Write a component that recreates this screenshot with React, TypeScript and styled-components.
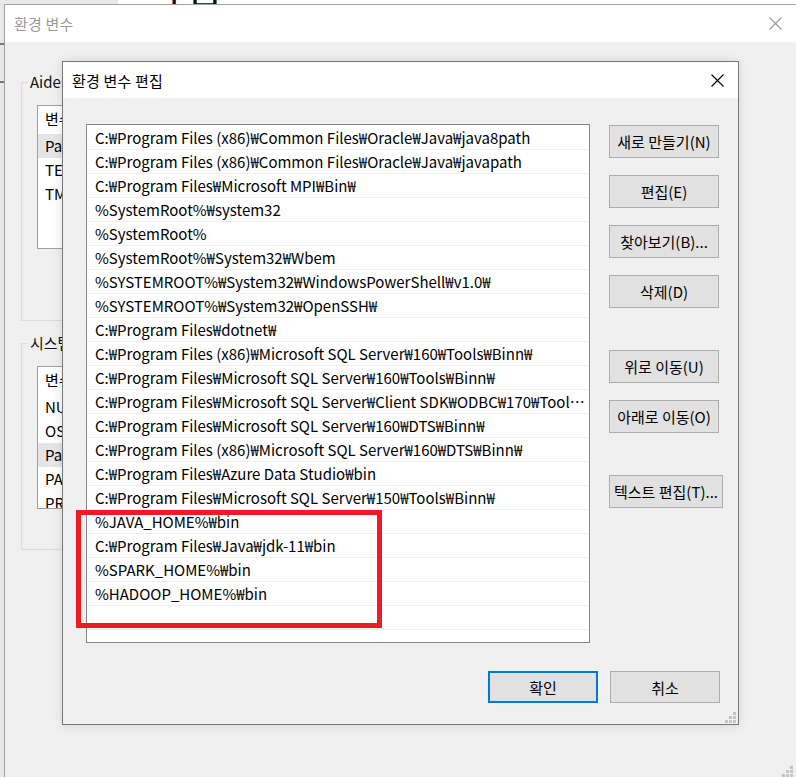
import React from "react";
import styled, { createGlobalStyle } from "styled-components";

const Global = createGlobalStyle`
  html, body { margin: 0; padding: 0; }
  body {
    width: 796px;
    height: 777px;
    overflow: hidden;
    background: #f0f0f0;
    font-family: "Noto Sans CJK KR", "Noto Sans", sans-serif;
    font-size: 15px;
    color: #000;
  }
  * { box-sizing: border-box; }
`;

const Screen = styled.div`
  width: 796px;
  height: 777px;
  overflow: hidden;
  position: relative;
  display: flex;
  flex-direction: column;
`;

const TopStrip = styled.div`
  height: 4px;
  display: flex;
  overflow: hidden;
  flex-shrink: 0;
`;

const BackPanel = styled.div`
  width: 118px;
  background: #e8e8e8;
`;

const BackDoc = styled.div`
  flex: 1;
  background: #fff;
  overflow: hidden;
`;

const BackHeading = styled.div`
  font-size: 40px;
  line-height: 40px;
  font-weight: 400;
  margin-top: -34px;
  margin-left: 28px;
  letter-spacing: 2px;
  color: #111;
`;

const Desk = styled.div`
  flex: 1;
  display: flex;
  min-height: 0;
`;

const SideStrip = styled.div`
  width: 4px;
  flex-shrink: 0;
  background:
    linear-gradient(#777, #777) 0 39px / 4px 2px no-repeat,
    linear-gradient(#777, #777) 0 77px / 4px 2px no-repeat,
    #e8e8e8;
`;

const OuterWindow = styled.div`
  flex: 1;
  min-width: 0;
  display: flex;
  flex-direction: column;
  border-left: 1px solid #a0a0a0;
  border-top: 1px solid #a0a0a0;
  background: #f0f0f0;
  overflow: hidden;
`;

const TitleBar = styled.div<{ $h: number }>`
  height: ${(p) => p.$h}px;
  flex-shrink: 0;
  background: #fff;
  display: flex;
  align-items: center;
  justify-content: space-between;
  padding: 0 14px 0 9px;
`;

const TitleText = styled.span<{ $inactive?: boolean }>`
  font-size: 15px;
  color: ${(p) => (p.$inactive ? "#999" : "#000")};
  letter-spacing: 0.2px;
`;

const CloseIcon = ({ color }: { color: string }) => (
  <svg width="13" height="13" viewBox="0 0 13 13">
    <path d="M0.5 0.5 L12.5 12.5 M12.5 0.5 L0.5 12.5" stroke={color} strokeWidth="1.1" />
  </svg>
);

const OuterContent = styled.div`
  padding: 30px 0 0 16px;
  display: flex;
  flex-direction: column;
  gap: 12px;
`;

const GroupBox = styled.fieldset<{ $h: number }>`
  margin: 0;
  width: 690px;
  height: ${(p) => p.$h}px;
  border: 1px solid #dcdcdc;
  padding: 13px 0 0 0;
`;

const Legend = styled.legend`
  margin-left: 6px;
  padding: 0 2px;
  font-size: 15px;
  line-height: 20px;
  color: #111;
`;

const VarList = styled.div<{ $h: number }>`
  width: 640px;
  height: ${(p) => p.$h}px;
  margin-left: 15px;
  border: 1px solid #a0a0a0;
  background: #fff;
  overflow: hidden;
`;

const VarHeader = styled.div`
  height: 28px;
  line-height: 26px;
  padding-left: 7px;
`;

const VarRow = styled.div<{ $sel?: boolean }>`
  height: 24px;
  line-height: 24px;
  padding-left: 7px;
  background: ${(p) => (p.$sel ? "#e5e5e5" : "transparent")};
  white-space: nowrap;
`;

const EditDialog = styled.div`
  position: absolute;
  left: 62px;
  top: 61px;
  width: 677px;
  height: 664px;
  border: 1px solid #777;
  background: #f0f0f0;
  display: flex;
  flex-direction: column;
  box-shadow: 0 0 10px rgba(0, 0, 0, 0.12);
`;

const DialogBody = styled.div`
  flex: 1;
  display: flex;
  flex-direction: column;
  padding: 26px 18px 0 23px;
  position: relative;
`;

const MainGrid = styled.div`
  display: grid;
  grid-template-columns: 504px 1fr;
  column-gap: 19px;
`;

const ListWrap = styled.div`
  position: relative;
`;

const PathList = styled.div`
  height: 519px;
  border: 1px solid #828790;
  background: #fff;
  overflow: hidden;
  padding-top: 1px;
`;

const PathRow = styled.div`
  height: 24px;
  line-height: 23px;
  border-bottom: 1px solid #efefef;
  padding: 0 4px 0 8px;
  white-space: nowrap;
  overflow: hidden;
  text-overflow: ellipsis;
`;

const Annotation = styled.div`
  position: absolute;
  left: -10px;
  top: 386px;
  width: 306px;
  height: 118px;
  border: 5px solid #ec1c24;
  pointer-events: none;
`;

const ButtonColumn = styled.div`
  display: flex;
  flex-direction: column;
  align-items: flex-start;
  padding-top: 1px;
`;

const ButtonGroup = styled.div<{ $mt: number }>`
  display: flex;
  flex-direction: column;
  gap: 17px;
  margin-top: ${(p) => p.$mt}px;
`;

const WinButton = styled.button<{ $w?: number; $h?: number; $default?: boolean }>`
  width: ${(p) => p.$w ?? 110}px;
  height: ${(p) => p.$h ?? 33}px;
  background: #e1e1e1;
  border: ${(p) => (p.$default ? "2px solid #0078d7" : "1px solid #adadad")};
  font-family: inherit;
  font-size: 15px;
  color: #000;
  padding: 0;
  white-space: nowrap;
`;

const Footer = styled.div`
  display: flex;
  justify-content: flex-end;
  gap: 12px;
  margin-top: 28px;
`;

const Grip = styled.svg<{ $r: number; $b: number }>`
  position: absolute;
  right: ${(p) => p.$r}px;
  bottom: ${(p) => p.$b}px;
`;

const GripIcon = ({ r, b }: { r: number; b: number }) => (
  <Grip $r={r} $b={b} width="11" height="11" viewBox="0 0 11 11">
    <g fill="#c4c4c4">
      <rect x="8" y="0" width="3" height="3" />
      <rect x="4" y="4" width="3" height="3" />
      <rect x="8" y="4" width="3" height="3" />
      <rect x="0" y="8" width="3" height="3" />
      <rect x="4" y="8" width="3" height="3" />
      <rect x="8" y="8" width="3" height="3" />
    </g>
  </Grip>
);

const paths = [
  "C:₩Program Files (x86)₩Common Files₩Oracle₩Java₩java8path",
  "C:₩Program Files (x86)₩Common Files₩Oracle₩Java₩javapath",
  "C:₩Program Files₩Microsoft MPI₩Bin₩",
  "%SystemRoot%₩system32",
  "%SystemRoot%",
  "%SystemRoot%₩System32₩Wbem",
  "%SYSTEMROOT%₩System32₩WindowsPowerShell₩v1.0₩",
  "%SYSTEMROOT%₩System32₩OpenSSH₩",
  "C:₩Program Files₩dotnet₩",
  "C:₩Program Files (x86)₩Microsoft SQL Server₩160₩Tools₩Binn₩",
  "C:₩Program Files₩Microsoft SQL Server₩160₩Tools₩Binn₩",
  "C:₩Program Files₩Microsoft SQL Server₩Client SDK₩ODBC₩170₩Tools₩Binn₩",
  "C:₩Program Files₩Microsoft SQL Server₩160₩DTS₩Binn₩",
  "C:₩Program Files (x86)₩Microsoft SQL Server₩160₩DTS₩Binn₩",
  "C:₩Program Files₩Azure Data Studio₩bin",
  "C:₩Program Files₩Microsoft SQL Server₩150₩Tools₩Binn₩",
  "%JAVA_HOME%₩bin",
  "C:₩Program Files₩Java₩jdk-11₩bin",
  "%SPARK_HOME%₩bin",
  "%HADOOP_HOME%₩bin",
  "",
];

export default function App() {
  return (
    <>
      <Global />
      <Screen>
        <TopStrip>
          <BackPanel />
          <BackDoc>
            <BackHeading>사업</BackHeading>
          </BackDoc>
        </TopStrip>
        <Desk>
          <SideStrip />
          <OuterWindow>
            <TitleBar $h={37}>
              <TitleText $inactive>환경 변수</TitleText>
              <CloseIcon color="#999" />
            </TitleBar>
            <OuterContent>
              <GroupBox $h={249}>
                <Legend>Aidem에 대한 사용자 변수(U)</Legend>
                <VarList $h={144}>
                  <VarHeader>변수</VarHeader>
                  <VarRow $sel>Path</VarRow>
                  <VarRow>TEMP</VarRow>
                  <VarRow>TMP</VarRow>
                </VarList>
              </GroupBox>
              <GroupBox $h={217}>
                <Legend>시스템 변수(S)</Legend>
                <VarList $h={143}>
                  <VarHeader>변수</VarHeader>
                  <VarRow>NUMBER_OF_PROCESSORS</VarRow>
                  <VarRow>OS</VarRow>
                  <VarRow $sel>Path</VarRow>
                  <VarRow>PATHEXT</VarRow>
                  <VarRow>PROCESSOR_ARCHITECTURE</VarRow>
                </VarList>
              </GroupBox>
            </OuterContent>
          </OuterWindow>
        </Desk>
        <GripIcon r={3} b={0} />

        <EditDialog>
          <TitleBar $h={36}>
            <TitleText>환경 변수 편집</TitleText>
            <CloseIcon color="#000" />
          </TitleBar>
          <DialogBody>
            <MainGrid>
              <ListWrap>
                <PathList>
                  {paths.map((p, i) => (
                    <PathRow key={i}>{p || "\u00a0"}</PathRow>
                  ))}
                </PathList>
                <Annotation />
              </ListWrap>
              <ButtonColumn>
                <ButtonGroup $mt={0}>
                  <WinButton>새로 만들기(N)</WinButton>
                  <WinButton>편집(E)</WinButton>
                  <WinButton>찾아보기(B)...</WinButton>
                  <WinButton>삭제(D)</WinButton>
                </ButtonGroup>
                <ButtonGroup $mt={42}>
                  <WinButton>위로 이동(U)</WinButton>
                  <WinButton>아래로 이동(O)</WinButton>
                </ButtonGroup>
                <ButtonGroup $mt={42}>
                  <WinButton $w={114}>텍스트 편집(T)...</WinButton>
                </ButtonGroup>
              </ButtonColumn>
            </MainGrid>
            <Footer>
              <WinButton $h={32} $default>확인</WinButton>
              <WinButton $h={32}>취소</WinButton>
            </Footer>
            <GripIcon r={2} b={1} />
          </DialogBody>
        </EditDialog>
      </Screen>
    </>
  );
}
